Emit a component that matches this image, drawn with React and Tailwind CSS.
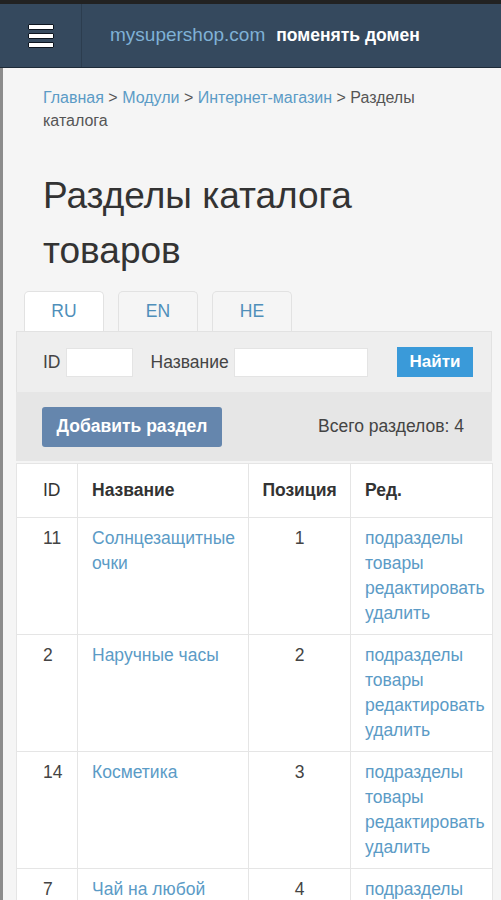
const rows = [
	{ id: "11", name: "Солнцезащитные очки", pos: 1 },
	{ id: "2", name: "Наручные часы", pos: 2 },
	{ id: "14", name: "Косметика", pos: 3 },
	{ id: "7", name: "Чай на любой вкус", pos: 4 },
]

const actions = ["подразделы", "товары", "редактировать", "удалить"]

export default function App() {
	return (
		<div className="h-[900px] w-[501px] overflow-hidden bg-[#f5f5f5] font-['Liberation_Sans',Arial,sans-serif]">
			{/* top strip */}
			<div className="h-[4px] bg-[#222]" />
			{/* header */}
			<div className="flex h-[64px] items-stretch border-b border-[#1e2b38] bg-[#35495e]">
				<div className="flex w-[82px] items-center justify-center border-r border-[#2c3d4f]">
					<div className="flex w-[26px] flex-col gap-[3px]">
						<span className="h-[6px] rounded-[1px] border border-[#0d1520] bg-white" />
						<span className="h-[6px] rounded-[1px] border border-[#0d1520] bg-white" />
						<span className="h-[6px] rounded-[1px] border border-[#0d1520] bg-white" />
					</div>
				</div>
				<div className="flex items-center pl-[28px]">
					<span className="text-[19px] text-[#7fb1d6]">mysupershop.com</span>
					<span className="ml-[11px] text-[17.5px] font-bold text-white">поменять домен</span>
				</div>
			</div>

			{/* content */}
			<div className="h-[832px] border-l-[3px] border-[#8c8c8c]">
				<div className="px-[40px] pt-[18px] text-[16px] leading-[23px] text-[#555]">
					<a className="text-[#5b9bc6]">Главная</a> &gt; <a className="text-[#5b9bc6]">Модули</a> &gt;{" "}
					<a className="text-[#5b9bc6]">Интернет-магазин</a> &gt; Разделы каталога
				</div>
				<h1 className="mt-[36px] w-[420px] px-[40px] text-[37px] leading-[55px] text-[#333]">
					Разделы каталога товаров
				</h1>

				<div className="mt-[13px] ml-[13px] w-[476px]">
					{/* tabs */}
					<div className="flex gap-[14px] pl-[8px] text-[17.5px] text-[#4f8fba]">
						<div className="flex h-[40px] w-[80px] items-center justify-center rounded-t-[5px] border border-b-0 border-[#e2e2e2] bg-white">
							RU
						</div>
						<div className="flex h-[40px] w-[80px] items-center justify-center rounded-t-[5px] border border-b-0 border-[#e2e2e2] bg-[#f5f5f5]">
							EN
						</div>
						<div className="flex h-[40px] w-[80px] items-center justify-center rounded-t-[5px] border border-b-0 border-[#e2e2e2] bg-[#f5f5f5]">
							HE
						</div>
					</div>

					{/* filter */}
					<div className="flex h-[61px] items-center border border-b-0 border-[#e2e2e2] bg-[#eeeeee] pl-[26px] pr-[18px] text-[17.5px] text-[#444]">
						<span>ID</span>
						<div className="ml-[5px] h-[29px] w-[67px] border border-[#e4e4e4] bg-white" />
						<span className="ml-[18px]">Название</span>
						<div className="ml-[5px] h-[29px] w-[134px] border border-[#e4e4e4] bg-white" />
						<button className="ml-auto h-[30px] w-[76px] bg-[#3a9ad9] text-[17px] font-bold text-white">
							Найти
						</button>
					</div>
					<div className="flex h-[69px] items-center justify-between bg-[#e6e6e6] pl-[26px] pr-[28px]">
						<button className="h-[40px] w-[180px] rounded-[3px] bg-[#6586ad] text-[17.5px] font-bold text-white">
							Добавить раздел
						</button>
						<span className="text-[17.5px] text-[#444]">Всего разделов: 4</span>
					</div>

					{/* table */}
					<table className="mt-[2px] w-[476px] table-fixed border-collapse bg-white text-[17.5px]">
						<colgroup>
							<col className="w-[61px]" />
							<col className="w-[171px]" />
							<col className="w-[102px]" />
							<col className="w-[142px]" />
						</colgroup>
						<thead>
							<tr className="h-[54px] text-[#333]">
								<th className="border border-[#e5e5e5] pl-[26px] text-left font-normal">ID</th>
								<th className="border border-[#e5e5e5] pl-[14px] text-left font-bold">Название</th>
								<th className="border border-[#e5e5e5] text-center font-bold">Позиция</th>
								<th className="border border-[#e5e5e5] pl-[14px] text-left font-bold">Ред.</th>
							</tr>
						</thead>
						<tbody>
							{rows.map((row) => (
								<tr key={row.id} className="h-[117px] align-top leading-[25px]">
									<td className="border border-[#e5e5e5] pl-[26px] pt-[8px] text-[#444]">{row.id}</td>
									<td className="border border-[#e5e5e5] pl-[14px] pr-[8px] pt-[8px] text-[#5b9bc6]">
										{row.name}
									</td>
									<td className="border border-[#e5e5e5] pt-[8px] text-center text-[#444]">{row.pos}</td>
									<td className="border border-[#e5e5e5] pl-[14px] pt-[8px] text-[#5b9bc6]">
										{actions.map((a) => (
											<div key={a}>{a}</div>
										))}
									</td>
								</tr>
							))}
						</tbody>
					</table>
				</div>
			</div>
		</div>
	)
}
